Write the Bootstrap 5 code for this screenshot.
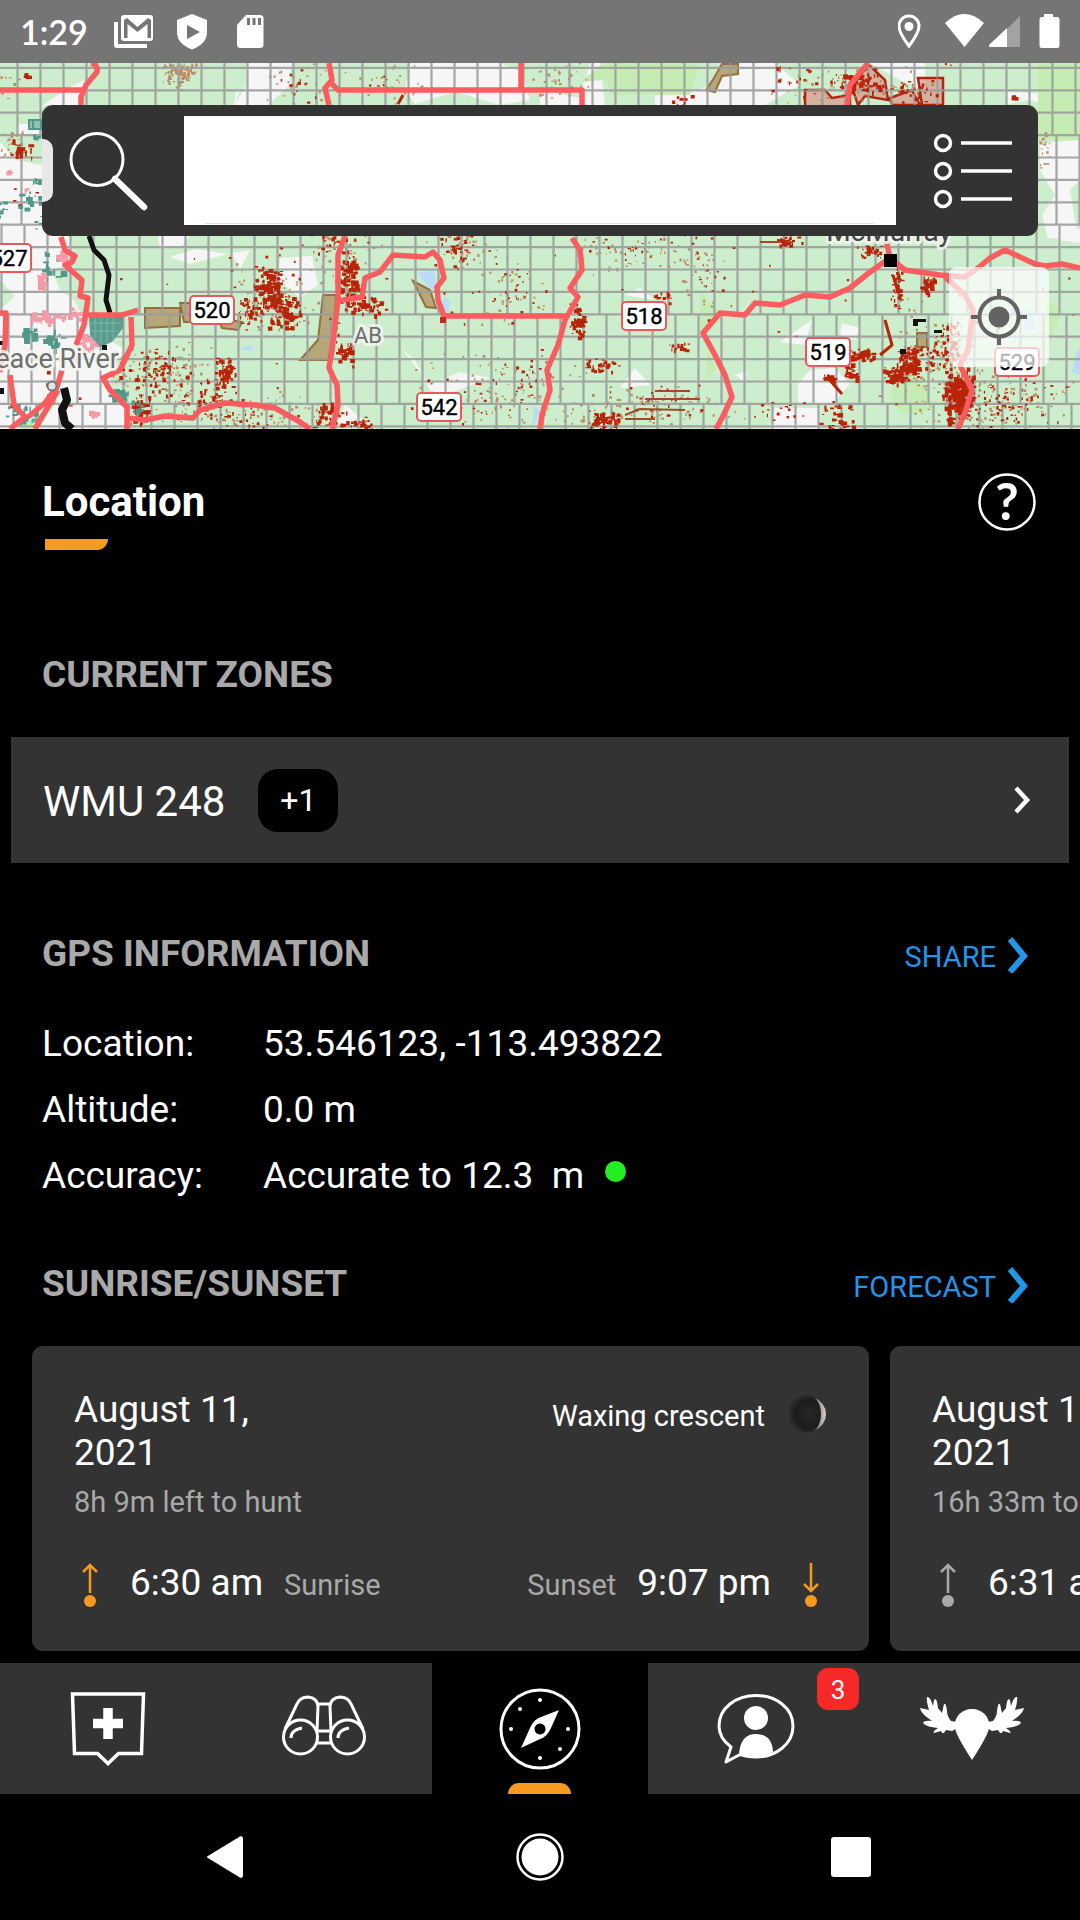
<!DOCTYPE html>
<html lang="en" data-bs-theme="dark">
<head>
<meta charset="utf-8">
<meta name="viewport" content="width=device-width, initial-scale=1">
<title>Location</title>
<link href="https://cdn.jsdelivr.net/npm/bootstrap@5.3.0/dist/css/bootstrap.min.css" rel="stylesheet">
<style>
  :root { --panel:#333333; --muted:#a9a9a9; --accent:#f79b20; --link:#2196e8; }
  body { background:#000; color:#fff; font-family:Roboto,sans-serif; font-size:37px; line-height:44px; overflow-x:hidden; }
  button { background:none; border:0; padding:0; color:inherit; }
  svg { display:block; }
  .status-bar { background:#757575; height:63px; padding:0 20px 0 20px; }
  .clock { font-family:Lato,sans-serif; font-weight:600; font-size:34px; line-height:63px; width:94px; }
  .map-area { height:366px; overflow:hidden; background:#cdeecd; }
  .map-area > svg { width:100%; height:100%; }
  .search-bar { top:42px; left:42px; right:42px; height:131px; padding:11px 0; background:var(--panel); border-radius:11px; }
  .search-bar button { width:142px; }
  .search-bar input { background:#fff linear-gradient(#dedede,#dedede) 50% 107px / 94% 1px no-repeat; border:0; border-radius:0; min-width:0; color:#222; outline:0; }
  .drawer-tab { left:42px; top:76px; width:11px; height:63px; background:#e8e8e8; border-radius:0 10px 10px 0; }
  .locate { right:31px; top:204px; width:100px; height:100px; background:rgba(255,255,255,.7); border-radius:8px; }
  .gutter { padding-left:42px; padding-right:44px; }
  .title-row { padding-top:44px; }
  .page-title { font-size:42px; line-height:50px; font-weight:700; margin:0; }
  .title-mark { width:63px; height:11px; margin:12px 0 0 3px; background:var(--accent); border-radius:0 0 11px 0; }
  .section-title { font-size:37px; line-height:44px; font-weight:700; color:var(--muted); margin:0; }
  .zones { margin-top:103px; }
  .zone-row { margin:40px 11px 69px; padding:0 38px 0 32px; height:126px; width:auto; background:var(--panel); font-size:42px; line-height:50px; text-decoration:none; color:#fff; }
  .zone-name { padding-top:3px; }
  .zone-more { background:#000; border-radius:20px; width:80px; height:63px; font-size:32px; line-height:63px; text-align:center; margin-left:33px; }
  .action-link { color:var(--link); font-size:29px; line-height:34px; text-decoration:none; }
  .action-link span { padding-top:5px; }
  .gps-list { margin:35px 0 53px; line-height:66px; }
  .gps-list dt { width:221px; font-weight:400; }
  .gps-list dd { margin:0; white-space:pre; }
  .ok-dot { width:21px; height:21px; border-radius:50%; background:#22ee22; margin:0 0 10px 21px; }
  .days { margin-top:40px; padding-left:32px; gap:21px; overflow:hidden; }
  .day-card { flex:0 0 837px; background:var(--panel); border-radius:11px; padding:42px 42px 46px; }
  .day-card .day-date { width:200px; line-height:43px; }
  .day-left { margin-top:11px; }
  .day-times { margin-top:42px; }
  .day-label { margin-left:21px; }
  .sun-icon { position:relative; top:2px; }
  .moon-phase { padding-top:6px; }
  .moon-phase span { padding-top:5px; }
  .small-text { font-size:29px; line-height:34px; }
  .muted-text { color:var(--muted); }
  .tab-bar { margin-top:12px; background:var(--panel); height:131px; }
  .tab-bar a { flex:1 1 0; min-width:0; }
  .tab-bar a.current { background:#000; }
  .tab-bar svg { width:100%; height:131px; }
  .tab-count { top:5px; right:5px; width:42px; height:42px; border-radius:11px; background:#f62828; font-size:26px; line-height:44px; text-align:center; color:#fff; }
  .tab-mark { bottom:0; left:50%; width:63px; height:11px; margin-left:-32px; background:var(--accent); border-radius:11px 11px 0 0; }
  .system-nav { height:126px; padding:0 201px; }
</style>
</head>
<body>
<header class="status-bar d-flex align-items-center">
  <span class="clock">1:29</span>
  <svg width="151" height="63" viewBox="114 0 151 63" fill="#fff" aria-hidden="true">
    <path d="M114 22h4v22h29v4h-30q-3 0-3-3z"/>
    <path fill-rule="evenodd" d="M124 15h26q3 0 3 3v20q0 3-3 3h-26q-3 0-3-3v-20q0-3 3-3zM124 20v18h3.500v-14l10 8 10-8v14h3.500v-18l-3-2-10.500 9-10.500-9z"/>
    <path fill-rule="evenodd" d="M192 14l15 6v12q0 12-15 17.500q-15-5.500-15-17.500v-12zM187 25v14l13-7z"/>
    <path fill-rule="evenodd" d="M246 15h14q3.500 0 3.500 3.500v26q0 3.500-3.500 3.500h-19.500q-3.500 0-3.500-3.500v-19.500zM247 18v7h3v-7zm5.500 0v7h3v-7zm5.500 0v7h3v-7z"/>
  </svg>
  <svg class="ms-auto" width="162" height="63" viewBox="898 0 162 63" fill="#fff" aria-hidden="true">
    <path fill="none" stroke="#fff" stroke-width="3" d="M909 46q-10-13-10-20a10 10 0 0 1 20 0q0 7-10 20z"/><circle cx="909" cy="26.500" r="4.500"/>
    <path d="M945 23q19-18 39 0l-19.500 24z"/>
    <path fill="#a3a3a3" d="M1020 16v31h-31z"/><path d="M1007 28v19h-18v-2z"/>
    <path d="M1044 14h9v3h4q2.500 0 2.500 2.500v26q0 2.500-2.500 2.500h-15q-2.500 0-2.500-2.500v-26q0-2.500 2.500-2.500h2z"/>
  </svg>
</header>

<section class="map-area position-relative" aria-label="Map">
  <svg viewBox="0 63 1080 366" preserveAspectRatio="xMidYMid slice" font-family="Roboto, sans-serif">
    <g fill="#f6f6f6">
      <path d="M36 110L65 90 84 80V105H46zM18 124H42V136H18zM0 142L16 160 42 165V225L70 237 75 262 52 270 60 290 74 300 84 320 110 340 125 350 110 370 112 388 126 405V429H0V310L15 296 0 280zM235 105L240 90 290 70 292 63 246 63V85zM268 105L290 85 290 63H246V88L236 92 234 105zM410 63H500L522 72 530 100 500 105 455 92 415 104 405 90zM158 236H190L180 248H160zM170 257L195 249 228 254 190 264zM232 253L250 250 240 269zM280 258L312 256 318 285 300 298 278 280zM402 349L415 360 430 390 445 395 490 378 460 372 430 385zM345 405L370 425 335 428z"/>
      <path d="M540 90L580 98 590 63H600L605 105H540zM655 95L700 90 735 70 740 63H775L800 85 765 105H655zM870 63H925V90L900 80zM1005 92L1080 95V105L1052 107 1030 100 1008 104zM1040 143L1080 140V180L1070 190 1075 220 1080 240 1048 238 1042 215 1055 195 1040 170zM625 295L640 288 655 300zM620 388L635 368 650 385zM780 342L812 320 805 345zM842 323L860 328 855 340 840 335zM798 384L810 370 835 368 850 384 832 404 798 404zM770 429L775 408H820V429zM735 375L747 371 745 382zM1058 240L1068 228 1080 229V243z"/>
    </g>
    <g fill="#c5edb3">
      <path d="M604 63H700L690 95H612L605 80 580 82zM1038 63H1080V140H1038zM700 290L720 313 705 340 716 370 705 380 708 350 700 335zM890 390L910 370 925 385 935 410 905 415 893 405zM1045 300L1062 310 1050 345zM18 429L60 398 35 429z"/>
    </g>
    <g fill="#b9dbf7"><path d="M417 273L434 270 436 290 430 288zM444 296L450 300 448 320 440 315zM238 349L250 345 255 351zM534 405L540 412 532 429zM1020 310h12l4 20h-10zM1076 355L1080 348V375L1072 372zM700 135h4v8z"/></g>
    <g fill="#b7a678" stroke="#93703f" stroke-width="2">
      <path d="M145 308H180V326L145 328zM323 295H336L333 340 328 360H300L318 340zM722 64H738V74L722 76 715 92 706 90 714 78zM180 303H196V322H184zM218 318L242 322 238 330 222 328zM413 281L430 290 436 308 426 307zM917 333h10v14h-10z"/>
    </g>
    <g fill="#d49c8d" fill-opacity=".75" stroke="#b32410" stroke-width="2.500">
      <path d="M918 78H943V105H922zM805 90L825 90 832 98 850 95V110H805zM850 82L870 66 885 80 888 100 865 96 858 105zM890 98L912 90 920 105H892z"/>
    </g>
    <path id="clearings-soft" fill="#b8734a" fill-opacity=".8"/>
    <path id="map-grid" fill="none" stroke="#9a9d9b" stroke-width="2.200" stroke-opacity=".9"/>
    <path id="clearings" fill="#b92308"/>
    <path id="wells" fill="#50998a"/>
    <path id="farms" fill="#f59aa6"/>
    <path d="M89 316H123V328L112 342 100 347 90 335z" fill="#5b9c8e"/>
    <path d="M95 316V338M101 316V344M107 316V343M113 316V340M90 323H122M90 331H118" stroke="#7db5a8" stroke-width="1" fill="none"/>
    <path d="M29 120h12v9H29zM33 120v9" fill="#8cc0b0" stroke="#50998a" stroke-width="2"/>
    <g fill="none" stroke="#a04a2a" stroke-width="2"><path d="M655 391H690M645 399H700M625 415L640 409 685 410M760 242H790M625 419H655"/></g>
    <path fill="none" stroke="#b92308" stroke-width="3" stroke-linejoin="round" d="M885 320L892 345 880 355M893 275L898 292M828 378L842 394M398 104L403 95M780 239l8 6"/>
    <g fill="none" stroke="#111" stroke-width="5" stroke-linejoin="round"><path d="M89 236L94 250 104 260 109 275 106 300 110 313"/><path stroke-width="8" d="M64 388L67 400 62 410 65 423 72 429"/></g>
    <path d="M913 319h13v3h-8v4h-5zM934 330h8v3h-8zM900 349h6v5h-6zM0 341h5v4H0zM0 388h4v6H0zM102 345h5v5h-5z" fill="#111"/>
    <g fill="none" stroke="#fb5c5f" stroke-width="5.500" stroke-linejoin="round">
      <path d="M0 90H83M91 63Q98 64 97 72L86 85 81 97V105M521 63V90M329 63L332 80 325 88 329 105M332 84L338 90H582V105M868 63L850 85 847 105"/>
      <path d="M61 237L65 250 75 256 72 262 65 265 74 273 82 280 80 296 88 298 84 325 76 345M88 315H122L138 310M131 317L132 345 120 370 103 378 110 390 127 407V429M127 418L145 420 165 416 193 418 200 410 225 403 255 405 275 408 300 422 310 429M0 313H6L5 345 0 372M10 375L14 405 25 417 10 429M62 370L57 387 45 403 28 417M58 390L35 429"/>
      <path d="M345 236L338 255V300L332 350 329 368 337 385 338 405 332 429M338 301L362 297 365 278 380 272 393 255 425 257 433 252 440 260 444 278 437 287 438 300 444 316H566"/>
      <path d="M572 238L580 250 582 270 570 288 578 297 565 320 558 345 547 370 550 390 542 415 540 429M886 240L890 258 870 272 850 288 830 297 805 295 780 305 755 303 745 315 720 313 703 333 715 355 725 375 732 397 722 418 716 429"/>
      <path d="M890 258L905 270 940 275 965 277 978 268 990 258 1005 250 1020 257 1035 264 1045 266 1062 264 1080 268M945 277L965 295 973 310 968 350 960 365 972 390 966 410 958 429"/>
    </g>
    <path d="M884 254h13v13h-13z"/>
    <path d="M440 317h6v6h-6z" fill="#c22a1a"/>
    <circle cx="52" cy="386" r="4.500" fill="#e5e5e5" stroke="#777" stroke-width="2"/>
    <g fill="#6b6f6e" stroke="#f3f5f1" stroke-opacity=".85" stroke-width="6" stroke-linejoin="round" paint-order="stroke" font-size="27">
      <text x="119" y="368" text-anchor="end">Peace River</text>
      <text x="354" y="343" font-size="22">AB</text>
      <text x="889" y="241" text-anchor="middle" font-size="28" fill="#444">McMurray</text>
    </g>
    <g fill="#fff" stroke="#e8585c" stroke-width="2">
      <rect x="-14" y="244" width="45" height="28" rx="4"/><rect x="190" y="296" width="44" height="28" rx="4"/><rect x="417" y="393" width="44" height="28" rx="4"/><rect x="622" y="302" width="44" height="28" rx="4"/><rect x="806" y="338" width="44" height="28" rx="4"/><rect x="995" y="348" width="44" height="28" rx="4"/>
    </g>
    <g font-size="22" text-anchor="middle" stroke="#000" stroke-width=".4">
      <text x="9" y="266">527</text><text x="212" y="318">520</text><text x="439" y="415">542</text><text x="644" y="324">518</text><text x="828" y="360">519</text><text x="1017" y="370">529</text>
    </g>
  </svg>

  <form class="search-bar position-absolute d-flex align-items-stretch" role="search">
    <button type="submit" aria-label="Search">
      <svg width="142" height="109" viewBox="42 116 142 109" fill="none" stroke="#fff"><circle cx="97" cy="159.500" r="26" stroke-width="3"/><path d="M115 179L144 207" stroke-width="6.500" stroke-linecap="round"/></svg>
    </button>
    <input class="flex-grow-1" type="text" aria-label="Search the map">
    <button type="button" aria-label="Layers">
      <svg width="142" height="109" viewBox="896 116 142 109" fill="none" stroke="#fff" stroke-width="3.500"><circle cx="943" cy="143" r="7.500"/><circle cx="943" cy="171" r="7.500"/><circle cx="943" cy="199" r="7.500"/><path d="M961 143h51M961 171h51M961 199h51"/></svg>
    </button>
  </form>
  <div class="drawer-tab position-absolute"></div>
  <button class="locate position-absolute" type="button" aria-label="Centre on my location">
    <svg width="100" height="100" viewBox="0 0 100 100" fill="none" stroke="#636363" stroke-width="4"><circle cx="50" cy="50" r="19.500"/><path d="M50 22v10M50 68v10M22 50h10M68 50h10"/><circle cx="50" cy="50" r="10.500" fill="#636363" stroke="none"/></svg>
  </button>
</section>

<main>
  <div class="gutter title-row d-flex justify-content-between align-items-start">
    <div class="pt-1">
      <h1 class="page-title">Location</h1>
      <div class="title-mark"></div>
    </div>
    <button type="button" aria-label="Help">
      <svg width="58" height="58" viewBox="0 0 58 58"><circle cx="29" cy="29" r="27.500" fill="none" stroke="#fff" stroke-width="2.500"/><text x="29" y="47" text-anchor="middle" font-family="Lato, sans-serif" font-weight="700" font-size="51" fill="#fff">?</text></svg>
    </button>
  </div>

  <section class="zones">
    <h2 class="section-title gutter">CURRENT ZONES</h2>
    <a href="#zones" class="zone-row d-flex align-items-center">
      <span class="zone-name">WMU 248</span><span class="zone-more">+1</span>
      <svg class="ms-auto" width="18" height="30" viewBox="0 0 18 30" fill="none" stroke="#fff" stroke-width="4.500"><path d="M3 3L14 15 3 27"/></svg>
    </a>
  </section>

  <section class="gutter">
    <div class="d-flex justify-content-between align-items-center">
      <h2 class="section-title">GPS INFORMATION</h2>
      <a href="#share" class="action-link d-flex align-items-center"><span>SHARE</span>
        <svg class="ms-2" width="32" height="38" viewBox="0 0 32 38" fill="none" stroke="#2196e8" stroke-width="6"><path d="M6 4L20 21 6 37"/></svg></a>
    </div>
    <dl class="gps-list">
      <div class="d-flex"><dt>Location:</dt><dd>53.546123, -113.493822</dd></div>
      <div class="d-flex"><dt>Altitude:</dt><dd>0.0 m</dd></div>
      <div class="d-flex align-items-center"><dt>Accuracy:</dt><dd>Accurate to 12.3  m</dd><span class="ok-dot"></span></div>
    </dl>
  </section>

  <section>
    <div class="gutter d-flex justify-content-between align-items-center">
      <h2 class="section-title">SUNRISE/SUNSET</h2>
      <a href="#forecast" class="action-link d-flex align-items-center"><span>FORECAST</span>
        <svg class="ms-2" width="32" height="38" viewBox="0 0 32 38" fill="none" stroke="#2196e8" stroke-width="6"><path d="M6 4L20 21 6 37"/></svg></a>
    </div>
    <div class="days d-flex">
      <article class="day-card">
        <div class="d-flex justify-content-between align-items-start">
          <div class="day-date">August 11, 2021</div>
          <div class="small-text moon-phase d-flex align-items-center"><span>Waxing crescent</span>
            <svg class="ms-4" width="38" height="38" viewBox="0 0 38 38" aria-hidden="true"><defs><radialGradient id="moon" cx=".55" cy=".5" r=".5"><stop offset="0" stop-color="#262626"/><stop offset=".75" stop-color="#1c1c1c"/><stop offset="1" stop-color="#2b2b2b"/></radialGradient><linearGradient id="limb"><stop offset="0" stop-color="#666"/><stop offset="1" stop-color="#d8d4ca"/></linearGradient></defs><circle cx="18" cy="19" r="19" fill="url(#moon)"/><path d="M25 2Q37 8 37 19T25 36Q32 30 32 19T25 2z" fill="url(#limb)"/></svg></div>
        </div>
        <div class="small-text muted-text day-left">8h 9m left to hunt</div>
        <div class="d-flex align-items-baseline day-times">
          <svg class="align-self-center sun-icon" width="56" height="44" viewBox="0 0 56 44" fill="none" stroke="#f79b20" stroke-width="2.500"><path d="M16 30V2M9 9L16 2 23 9"/><circle cx="16" cy="38" r="6" fill="#f79b20" stroke="none"/></svg>
          <span>6:30 am</span><span class="small-text muted-text day-label">Sunrise</span>
          <span class="small-text muted-text ms-auto">Sunset</span><span class="day-label">9:07 pm</span>
          <svg class="align-self-center sun-icon" width="56" height="44" viewBox="0 0 56 44" fill="none" stroke="#f79b20" stroke-width="2.500"><path d="M40 0V28M33 21L40 28 47 21"/><circle cx="40" cy="38" r="6" fill="#f79b20" stroke="none"/></svg>
        </div>
      </article>
      <article class="day-card">
        <div class="day-date">August 12, 2021</div>
        <div class="small-text muted-text day-left">16h 33m to hunt</div>
        <div class="d-flex align-items-baseline day-times">
          <svg class="align-self-center sun-icon" width="56" height="44" viewBox="0 0 56 44" fill="none" stroke="#a9a9a9" stroke-width="2.500"><path d="M16 30V2M9 9L16 2 23 9"/><circle cx="16" cy="38" r="6" fill="#a9a9a9" stroke="none"/></svg>
          <span>6:31 am</span>
        </div>
      </article>
    </div>
  </section>
</main>

<footer>
  <nav class="tab-bar d-flex" aria-label="Main">
    <a href="#add" aria-label="Add a log"><svg viewBox="0 1663 216 131" fill="none" stroke="#fff" stroke-width="3.500"><path d="M72.500 1694H143.500L141.500 1753.500H118.500L108 1763.500 97.500 1753.500H74.500z"/><path d="M108 1708v31M93 1723.500h30" stroke-width="9.500"/></svg></a>
    <a href="#scout" aria-label="Scout"><svg viewBox="216 1663 216 131" fill="none" stroke="#fff" stroke-width="3"><circle cx="300.500" cy="1737" r="17"/><circle cx="347.500" cy="1737" r="17"/><path d="M285 1729L297 1704Q300 1697 308 1697Q317 1698 318 1706L317 1731M363 1729L351 1704Q348 1697 340 1697Q331 1698 330 1706L331 1731M318 1704h12M317 1731h14M316 1743h16M291 1738q0-8 11-10M338 1738q0-8 11-10"/></svg></a>
    <a href="#location" class="current position-relative" aria-label="Location" aria-current="page"><svg viewBox="432 1663 216 131"><circle cx="540" cy="1729" r="39" fill="none" stroke="#fff" stroke-width="3"/><path fill="#fff" fill-rule="evenodd" d="M559 1710L551 1728Q547 1737 540 1739L521 1748 530 1728Q534 1719 541 1717zM540 1723.500a5.500 5.500 0 1 0 .1 0z"/><g fill="#fff"><circle cx="540" cy="1700" r="2"/><circle cx="540" cy="1758" r="2"/><circle cx="511" cy="1729" r="2"/><circle cx="568" cy="1729" r="2"/><circle cx="520" cy="1709" r="2"/><circle cx="560" cy="1749" r="2"/></g></svg><span class="tab-mark position-absolute"></span></a>
    <a href="#community" class="position-relative" aria-label="Community"><svg viewBox="648 1663 216 131"><path fill="none" stroke="#fff" stroke-width="3" stroke-linejoin="round" d="M731 1747Q719 1738 719 1726C719 1708 736 1695.500 756 1695.500S793 1708 793 1726 776 1757 756 1757Q748 1757 740 1754.500L726 1762z"/><circle cx="756" cy="1718" r="12" fill="#fff"/><path fill="#fff" d="M739 1755Q740 1734 756 1734T773 1752Q758 1760 739 1755z"/></svg><span class="tab-count position-absolute">3</span></a>
    <a href="#hunt" aria-label="Hunts"><svg viewBox="864 1663 216 131" fill="#fff"><path d="M972 1709A17 17 0 0 1 989.500 1726Q989 1734 972 1760Q955 1734 954.500 1726A17 17 0 0 1 972 1709z"/><path id="antler" d="M957 1722L951 1721Q947 1716 947 1711Q946 1702 944 1704L942 1713 938 1708Q937 1697 934 1700L933 1706Q930 1696 927 1697Q926 1700 929 1710L920 1708Q921 1713 928 1718L932 1721Q924 1720 923 1723Q926 1727 938 1728Q932 1732 934 1733L941 1731Q943 1736 946 1730L952 1731 957 1728z"/><use href="#antler" transform="translate(1944 0) scale(-1 1)"/></svg></a>
  </nav>
  <nav class="system-nav d-flex justify-content-between align-items-center" aria-label="System">
    <button type="button" aria-label="Back"><svg width="48" height="50" viewBox="0 0 48 50"><path d="M7 25L39 5.500Q41 4.500 41 7V43Q41 45.500 39 44.500z" fill="#fff" stroke="#fff" stroke-width="2" stroke-linejoin="round"/></svg></button>
    <button type="button" aria-label="Home"><svg width="48" height="50" viewBox="0 0 48 50"><circle cx="24" cy="25" r="22.500" fill="none" stroke="#fff" stroke-width="2.500"/><circle cx="24" cy="25" r="18.500" fill="#fff"/></svg></button>
    <button type="button" aria-label="Recent apps"><svg width="48" height="50" viewBox="0 0 48 50"><rect x="0" y="5" width="40" height="40" rx="3" fill="#fff"/></svg></button>
  </nav>
</footer>

<script src="https://cdn.jsdelivr.net/npm/bootstrap@5.3.0/dist/js/bootstrap.bundle.min.js"></script>
<script>
  // Survey grid: rows of townships, each band shifted a little sideways.
  (function () {
    var rows = [], d = '', y;
    for (y = 45.5; y < 450; y += 22.4) rows.push(y);
    rows.forEach(function (top) {
      var off = top < 130 ? 17.5 : top < 220 ? 21.5 : top < 310 ? 1.5 : top < 400 ? 8.5 : 13.5;
      d += 'M0 ' + top + 'H1080';
      for (var x = off; x < 1080; x += 23) d += 'M' + x + ' ' + top + 'v22.4';
    });
    document.getElementById('map-grid').setAttribute('d', d);

    var seed = 7;
    function rnd() { seed = (seed * 16807) % 2147483647; return seed / 2147483647; }
    // Each cluster: centre x, centre y, spread x, spread y, count, largest size.
    function scatter(id, density, clusters) {
      var p = '';
      clusters.forEach(function (c) {
        for (var i = 0; i < c[4] * density; i++) {
          var x = c[0] + (rnd() + rnd() - 1) * c[2], y = c[1] + (rnd() + rnd() - 1) * c[3];
          var w = 1 + rnd() * c[5], h = 1 + rnd() * c[5];
          p += 'M' + x.toFixed(1) + ' ' + y.toFixed(1) + 'h' + w.toFixed(1) + 'v' + h.toFixed(1) + 'h-' + w.toFixed(1) + 'z';
        }
      });
      document.getElementById(id).setAttribute('d', p);
    }
    scatter('clearings', 0.55, [
      [268,288,18,24,230,4],[285,312,18,22,130,4],[250,310,13,13,80,3],[346,280,12,28,130,4],[365,305,28,10,80,4],
      [345,350,13,18,60,4],[330,240,30,20,50,3],[460,240,22,30,90,3],[515,290,25,35,40,2],[225,372,12,18,100,4],
      [150,370,40,28,130,3],[205,395,45,25,90,3],[140,410,12,20,90,4],[240,415,60,20,70,2],[330,415,22,15,70,4],
      [360,423,14,7,50,3],[480,400,80,30,50,2],[530,370,25,35,35,2.5],[577,320,9,20,100,4],[600,365,24,8,60,3],
      [604,420,18,12,140,3],[660,405,55,28,50,2],[678,346,12,8,30,3],[662,296,10,10,30,3],[630,250,50,18,30,2],
      [786,241,12,6,60,3],[700,265,30,40,25,2],[870,250,14,9,60,3],[897,285,7,26,70,3],[908,363,14,18,170,4],
      [862,355,13,7,100,4],[850,372,10,10,40,4],[893,375,13,10,70,4],[926,284,7,10,60,4],[957,395,16,30,330,5],[950,345,12,28,110,3],
      [1000,405,50,30,110,2],[838,418,20,18,60,4],[780,415,30,18,30,2.5],[1020,400,60,35,40,2],[827,377,7,3,40,4],
      [300,92,30,28,25,3],[385,85,30,25,12,2],[20,148,14,10,22,5],[928,351,20,20,60,3],
      [860,80,30,16,120,4],[915,90,35,18,60,3],[800,80,40,25,30,3],[680,100,12,10,20,3],[25,205,25,30,8,4],
      [950,63,8,8,5,4],[1013,97,3,3,14,4],[26,73,4,4,8,4],[18,150,5,5,18,6],[245,300,140,100,70,2],[700,300,560,140,110,2],[45,390,45,35,10,4]
    ]);
    scatter('clearings-soft', 0.55, [
      [180,72,20,12,200,2],[179,85,4,20,20,2],[300,85,45,25,50,2],[390,85,35,25,50,2],[10,80,20,20,20,2],[268,300,45,45,150,2],
      [160,375,60,35,250,2],[240,410,90,25,200,2],[500,390,90,45,200,2],[640,410,110,25,190,2],[630,250,60,30,90,2],
      [700,260,30,50,90,2],[930,360,60,70,200,2],[1000,400,90,35,240,2],[850,85,90,25,130,2],[1045,150,7,20,40,2],
      [560,80,30,20,70,2],[345,270,40,50,130,2],[460,245,35,30,60,2],[510,290,35,45,90,2],[12,140,14,20,40,2]
    ]);
    scatter('wells', 1, [
      [37,182,8,10,8,5],[28,200,15,15,12,6],[35,136,6,3,5,4],[52,270,18,20,12,6],[28,333,12,8,22,6],
      [52,340,10,12,20,5],[118,395,12,10,36,4],[135,408,8,8,18,4],[20,412,18,14,26,5],[38,220,4,18,4,4],[0,210,4,10,8,5]
    ]);
    scatter('farms', 1, [
      [60,255,7,8,16,6],[48,316,22,8,26,6],[40,280,4,9,24,5],[85,342,12,9,26,6],[92,413,4,4,8,5],[7,171,3,3,5,4],[25,188,2,3,4,4],[74,312,9,8,12,5]
    ]);
  })();
</script>
</body>
</html>
